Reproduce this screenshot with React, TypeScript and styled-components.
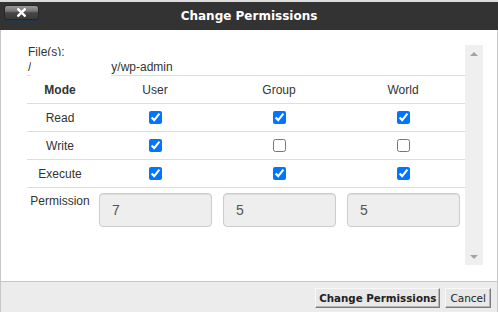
import React from 'react';
import styled, { createGlobalStyle } from 'styled-components';

const GlobalStyle = createGlobalStyle`
  html, body {
    margin: 0;
    padding: 0;
    background: #dcdcdc;
    font-family: "Liberation Sans", Arial, sans-serif;
  }
  * { box-sizing: border-box; }
`;

type Perm = { mode: string; user: boolean; group: boolean; world: boolean };

const rows: Perm[] = [
  { mode: 'Read', user: true, group: true, world: true },
  { mode: 'Write', user: true, group: false, world: false },
  { mode: 'Execute', user: true, group: true, world: true },
];

const octal = ['7', '5', '5'];

export default function App() {
  return (
    <>
      <GlobalStyle />
      <Dialog>
        <Header>
          <CloseButton aria-label="Close">
            <svg width="9" height="9" viewBox="0 0 9 9">
              <path d="M1.3 1.3 L7.7 7.7 M7.7 1.3 L1.3 7.7" stroke="#fff" strokeWidth="2.4" strokeLinecap="square" />
            </svg>
          </CloseButton>
          <Title>Change Permissions</Title>
        </Header>

        <Body>
          <ScrollArea>
            <FileInfo>
              <div>File(s):</div>
              <div>
                /<Redacted />y/wp-admin
              </div>
            </FileInfo>

            <PermGrid>
              <HeadCell $first>Mode</HeadCell>
              <HeadCell>User</HeadCell>
              <HeadCell>Group</HeadCell>
              <HeadCell>World</HeadCell>

              {rows.map((r) => (
                <React.Fragment key={r.mode}>
                  <Cell>{r.mode}</Cell>
                  <Cell><input type="checkbox" defaultChecked={r.user} /></Cell>
                  <Cell><input type="checkbox" defaultChecked={r.group} /></Cell>
                  <Cell><input type="checkbox" defaultChecked={r.world} /></Cell>
                </React.Fragment>
              ))}

              <PermLabel>Permission</PermLabel>
              {octal.map((v, i) => (
                <InputCell key={i}>
                  <OctalInput value={v} disabled readOnly />
                </InputCell>
              ))}
            </PermGrid>
          </ScrollArea>

          <Scrollbar>
            <Arrow $dir="up" />
            <Arrow $dir="down" />
          </Scrollbar>
        </Body>

        <Footer>
          <FooterButton $primary>Change Permissions</FooterButton>
          <FooterButton>Cancel</FooterButton>
        </Footer>
      </Dialog>
    </>
  );
}

const Dialog = styled.div`
  width: 498px;
  height: 310px;
  margin-top: 2px;
  display: flex;
  flex-direction: column;
  background: #fff;
`;

const Header = styled.div`
  height: 28px;
  background: #333;
  display: grid;
  grid-template-columns: 1fr auto 1fr;
  align-items: center;
  padding: 0 4px;
`;

const CloseButton = styled.button`
  justify-self: start;
  align-self: start;
  margin-top: 3px;
  width: 35px;
  height: 15px;
  padding: 0;
  border: 1px solid #262626;
  border-radius: 3px;
  background: linear-gradient(#9a9a9a 0%, #767676 40%, #4b4644 52%, #3d3937 100%);
  box-shadow: 0 1px 0 #1f3650;
  display: flex;
  align-items: center;
  justify-content: center;
`;

const Title = styled.div`
  color: #fff;
  font-family: "DejaVu Sans", Verdana, sans-serif;
  font-weight: bold;
  font-size: 12px;
  line-height: 28px;
`;

const Body = styled.div`
  flex: 1;
  display: flex;
  border-left: 1px solid #c8c8c8;
  border-right: 1px solid #c8c8c8;
  padding: 15px 14px 16px 26px;
`;

const ScrollArea = styled.div`
  flex: 1;
  color: #333;
  font-size: 12px;
`;

const FileInfo = styled.div`
  line-height: 15px;
  padding-left: 1px;
`;

const Redacted = styled.span`
  display: inline-block;
  position: relative;
  width: 80px;
  height: 1px;
  &::after {
    content: '';
    position: absolute;
    left: 0;
    right: 0;
    top: -14px;
    height: 20px;
    background: #fff;
    z-index: 1;
  }
`;

const PermGrid = styled.div`
  display: grid;
  grid-template-columns: 66px repeat(3, 1fr);
`;

const HeadCell = styled.div<{ $first?: boolean }>`
  height: 29px;
  border-top: 1px solid #ddd;
  border-bottom: 1px solid #ddd;
  display: flex;
  align-items: center;
  justify-content: center;
  font-weight: ${(p) => (p.$first ? 'bold' : 'normal')};
`;

const Cell = styled.div`
  height: 28px;
  border-bottom: 1px solid #ddd;
  display: flex;
  align-items: center;
  justify-content: center;

  input {
    margin: 0;
    width: 13px;
    height: 13px;
  }
`;

const PermLabel = styled.div`
  padding-top: 6px;
  text-align: center;
  line-height: 15px;
`;

const InputCell = styled.div`
  padding: 5px 5px 0 6px;
`;

const OctalInput = styled.input`
  width: 100%;
  height: 34px;
  padding: 6px 12px;
  font-family: "Liberation Sans", Arial, sans-serif;
  font-size: 14px;
  color: #555;
  background: #eee;
  border: 1px solid #ccc;
  border-radius: 4px;
  box-shadow: inset 0 1px 1px rgba(0, 0, 0, 0.075);
  opacity: 1;
`;

const Scrollbar = styled.div`
  width: 18px;
  background: #efefef;
  display: flex;
  flex-direction: column;
  justify-content: space-between;
  align-items: center;
  padding: 7px 0 6px;
`;

const Arrow = styled.div<{ $dir: 'up' | 'down' }>`
  width: 0;
  height: 0;
  border-left: 4px solid transparent;
  border-right: 4px solid transparent;
  ${(p) => (p.$dir === 'up' ? 'border-bottom: 4px solid #a3a3a3;' : 'border-top: 4px solid #a3a3a3;')}
`;

const Footer = styled.div`
  height: 31px;
  background: #ececec;
  border-top: 1px solid #c6c6c6;
  border-left: 1px solid #c8c8c8;
  border-right: 1px solid #c8c8c8;
  display: flex;
  justify-content: flex-end;
  align-items: flex-start;
  gap: 5px;
  padding: 6px 6px 0;
`;

const FooterButton = styled.button<{ $primary?: boolean }>`
  height: 20px;
  padding: 0 ${(p) => (p.$primary ? '3px' : '4px')};
  font-family: "DejaVu Sans", Verdana, sans-serif;
  font-size: ${(p) => (p.$primary ? '10.3px' : '10.5px')};
  font-weight: ${(p) => (p.$primary ? 'bold' : 'normal')};
  color: #222;
  background: #e8e8e8;
  border: 1px solid;
  border-color: #f8f8f8 #7a7a7a #7a7a7a #f8f8f8;
  box-shadow: inset -1px -1px 0 #b5b5b5;
  border-radius: 0;
`;
